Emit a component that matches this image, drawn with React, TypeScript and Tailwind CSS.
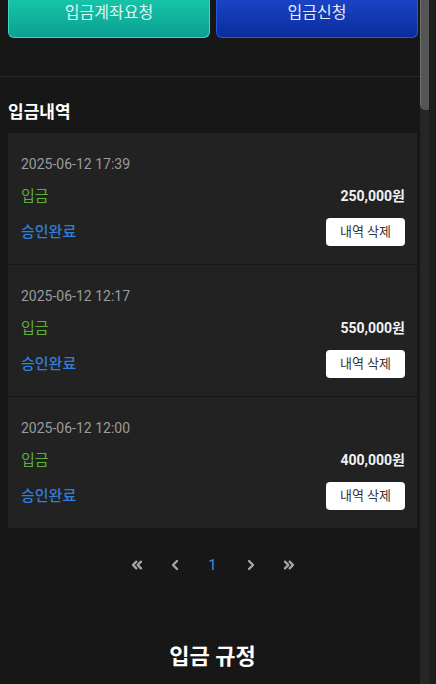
import React from "react";
import { ChevronLeft, ChevronRight, ChevronsLeft, ChevronsRight } from "lucide-react";

const items = [
  { date: "2025-06-12 17:39", amount: "250,000원" },
  { date: "2025-06-12 12:17", amount: "550,000원" },
  { date: "2025-06-12 12:00", amount: "400,000원" },
];

const App = () => {
  return (
    <div
      className="w-[436px] h-[684px] overflow-hidden flex bg-[#171717]"
      style={{ fontFamily: "Roboto, 'Noto Sans CJK KR', sans-serif" }}
    >
      <div className="w-[420px] flex flex-col">
        <div className="flex gap-[6px] pl-2 pr-[2px]">
          <div className="flex-1 h-[38px] flex justify-center pt-[3px] rounded-b-md border border-t-0 border-[#40d6bf] bg-gradient-to-b from-[#16c4a7] to-[#0c9f93] text-[#dff6f1] text-[16px] leading-5">
            입금계좌요청
          </div>
          <div className="flex-1 h-[38px] flex justify-center pt-[3px] rounded-b-md border border-t-0 border-[#2b57d4] bg-gradient-to-b from-[#1a44c6] to-[#0a2c9c] text-[#e6ebf7] text-[16px] leading-5">
            입금신청
          </div>
        </div>

        <div className="mt-[38px] h-px bg-[#2a2a2a]" />

        <div className="pl-2 pr-[3px]">
          <div className="mt-[23px] text-white text-[17px] leading-6 font-bold">입금내역</div>

          <div className="mt-[9px] bg-[#222222]">
            {items.map((it, i) => (
              <div
                key={i}
                className={`pt-[21px] pb-[18px] pl-[13px] pr-3 ${i > 0 ? "border-t border-[#181818]" : ""}`}
              >
                <div className="h-5 text-[14px] leading-5 text-[#9b9b9b]">{it.date}</div>
                <div className="mt-[11px] h-[22px] flex items-center justify-between">
                  <span className="text-[15px] text-[#5fae3a]">입금</span>
                  <span className="text-[14px] font-bold text-[#f2f2f2]">{it.amount}</span>
                </div>
                <div className="mt-[11px] h-[28px] flex items-center justify-between">
                  <span className="text-[15px] font-medium text-[#2f7fdc]">승인완료</span>
                  <span className="w-[79px] h-[28px] flex items-center justify-center rounded bg-white text-[13px] text-[#333]">
                    내역 삭제
                  </span>
                </div>
              </div>
            ))}
          </div>

          <div className="mt-[27px] h-5 flex items-center justify-center gap-[18px] text-[#a3a7ad]">
            <span className="w-5 flex justify-center"><ChevronsLeft size={16} strokeWidth={3.5} /></span>
            <span className="w-5 flex justify-center"><ChevronLeft size={16} strokeWidth={3.5} /></span>
            <span className="w-5 flex justify-center text-[15px] text-[#3a8fd0]">1</span>
            <span className="w-5 flex justify-center"><ChevronRight size={16} strokeWidth={3.5} /></span>
            <span className="w-5 flex justify-center"><ChevronsRight size={16} strokeWidth={3.5} /></span>
          </div>

          <div className="mt-[67px] text-center text-white text-[22px] leading-[30px] font-bold">입금 규정</div>
        </div>
      </div>

      <div className="w-[9px] bg-[#262626] flex flex-col">
        <div className="h-[110px] bg-[#555555] rounded-bl-md border-l border-[#707070]" />
      </div>
      <div className="flex-1 bg-[#1e1e1e]" />
    </div>
  );
};

export default App;
